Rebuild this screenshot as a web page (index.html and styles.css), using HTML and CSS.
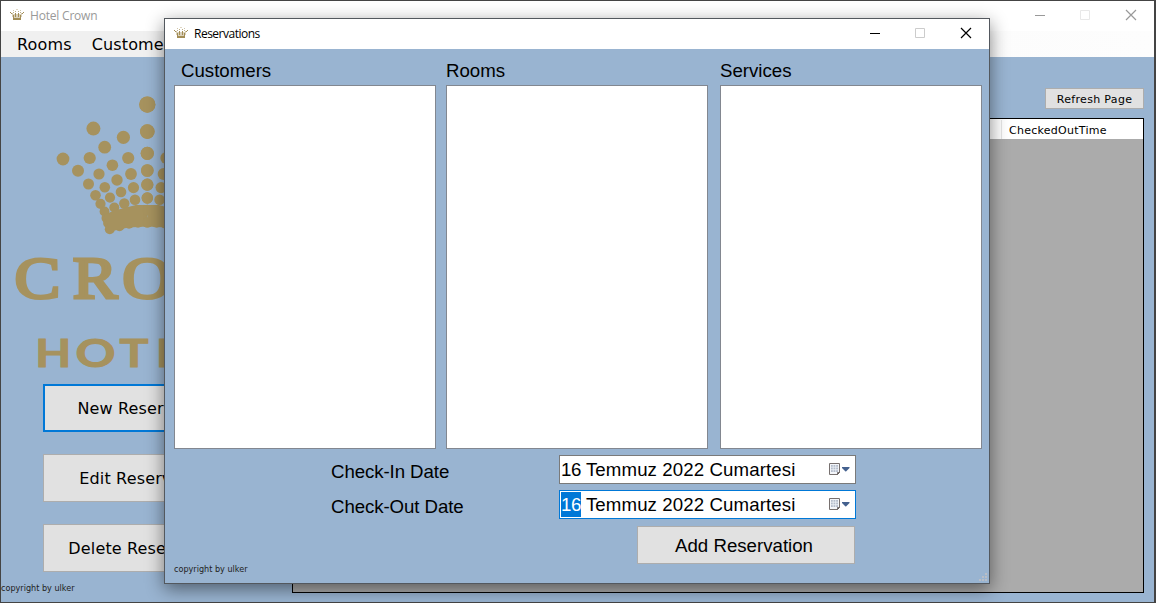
FILE: index.html
```
<!DOCTYPE html>
<html lang="en">
<head>
<meta charset="utf-8">
<title>Hotel Crown</title>
<link rel="stylesheet" href="styles.css">
</head>
<body>
<svg class="defs" width="0" height="0">
  <symbol id="crown-icon" viewBox="0 0 14 12">
    <g fill="#a38d55">
      <rect x="6" y="0" width="2" height="1" opacity=".35"/>
      <rect x="3" y="1" width="1" height="1" opacity=".5"/><rect x="10" y="1" width="1" height="1" opacity=".5"/>
      <rect x="5" y="2" width="1" height="1" opacity=".7"/><rect x="8" y="2" width="1" height="1" opacity=".7"/>
      <rect x="0" y="3" width="1" height="1"/><rect x="13" y="3" width="1" height="1"/>
      <rect x="3" y="3" width="1" height="1" opacity=".7"/><rect x="10" y="3" width="1" height="1" opacity=".7"/>
      <rect x="1" y="4" width="1.5" height="1"/><rect x="11.500" y="4" width="1.500" height="1"/>
      <rect x="2" y="5" width="10" height="3" opacity=".4"/>
      <rect x="5" y="4" width="1" height="4"/><rect x="8" y="4" width="1" height="4"/>
      <rect x="3" y="6" width="1" height="3"/><rect x="10" y="6" width="1" height="3"/>
      <rect x="3" y="8" width="8" height="1" opacity=".4"/>
      <rect x="3" y="9" width="8" height="2"/>
    </g>
  </symbol>
  <symbol id="calendar-icon" viewBox="0 0 21 13">
    <path d="M.5.500h10v9l-2 2h-8z" fill="#f4f6fa" stroke="#77706f"/>
    <path d="M8.500 11.500v-2h2z" fill="#5e5757" stroke="#5e5757" stroke-width=".7"/>
    <path d="M2 2h7v7H2z" fill="#b4bdcc"/>
    <path d="M2 4.200h7M2 6.700h7M4.200 2v7M6.700 2v7" stroke="#eef1f6" stroke-width=".8"/>
    <path d="M13 4h7.500v1L17 8.500h-.5L13 5z" fill="#44618f"/>
  </symbol>
</svg>

<div class="window main">
  <header class="titlebar">
    <svg class="app-icon"><use href="#crown-icon"/></svg>
    <span class="title">Hotel Crown</span>
    <svg class="controls" viewBox="0 0 104 12">
      <path d="M0 6.500h10" stroke="#999"/><path d="M45.500 1.500h9v9h-9z" stroke="#e8e8e8"/><path d="M91 1l10 10M101 1l-10 10" stroke="#999" stroke-width="1.200"/>
    </svg>
  </header>
  <nav class="menu"><span>Rooms</span><span>Customers</span></nav>
  <div class="body">
    <aside class="side">
      <svg class="logo" viewBox="0 57 292 327" fill="#a6925e">
        <g id="crown-half">
          <circle cx="147.300" cy="104.600" r="8.100"/><circle cx="147.300" cy="131.600" r="7.300"/><circle cx="147.300" cy="153.300" r="6.600"/><circle cx="147.300" cy="170.500" r="6.300"/><circle cx="147.300" cy="184.700" r="6.100"/><circle cx="147.300" cy="198" r="5.700"/>
          <circle cx="93.400" cy="128.600" r="7"/><circle cx="123.400" cy="137.300" r="6.600"/><circle cx="104.700" cy="147.200" r="6.400"/><circle cx="63" cy="159" r="6.400"/><circle cx="89.700" cy="158" r="6.100"/><circle cx="128.200" cy="158" r="6.100"/>
          <circle cx="78" cy="170.800" r="6"/><circle cx="112.400" cy="165.200" r="5.800"/><circle cx="99" cy="174" r="5.600"/><circle cx="131" cy="174" r="5.900"/><circle cx="88.500" cy="184" r="5.500"/><circle cx="117" cy="180" r="5.700"/>
          <circle cx="104.800" cy="187.200" r="5.300"/><circle cx="133.500" cy="187.600" r="5.600"/><circle cx="95.500" cy="195.300" r="5.300"/><circle cx="121" cy="192" r="5.300"/><circle cx="110" cy="197.600" r="5.100"/><circle cx="135" cy="199.700" r="5.300"/>
          <circle cx="100.500" cy="203.800" r="5.100"/><circle cx="124.300" cy="203.500" r="5.200"/><circle cx="114.300" cy="207.500" r="5"/><circle cx="104.500" cy="211.500" r="4.900"/>
          <circle cx="106.500" cy="218" r="5"/><circle cx="108" cy="223" r="4.900"/><circle cx="109.800" cy="229.300" r="5"/><circle cx="119.500" cy="226.300" r="5"/><circle cx="129" cy="223.800" r="5"/><circle cx="138" cy="222.800" r="5"/><circle cx="147.300" cy="222.600" r="5"/>
          <circle cx="116.500" cy="215.500" r="5"/><circle cx="126.500" cy="213" r="5"/><circle cx="137" cy="210.500" r="5.300"/><circle cx="147.300" cy="210" r="5.300"/>
          <path d="M104 215l9-4 11-3 12-3h11.300v21.500l-19 1-18 4z"/>
        </g>
        <use href="#crown-half" transform="translate(294.600 0) scale(-1 1)"/>
        <g class="crown-word">
          <text x="14.400" y="298" textLength="45.800" lengthAdjust="spacingAndGlyphs">C</text>
          <text x="72.800" y="298" textLength="44.700" lengthAdjust="spacingAndGlyphs">R</text>
          <text x="122.200" y="298" textLength="49.700" lengthAdjust="spacingAndGlyphs">O</text>
        </g>
        <g class="hotel-word">
          <text x="35.200" y="366.500" textLength="36" lengthAdjust="spacingAndGlyphs">H</text>
          <text x="75.500" y="366.500" textLength="40" lengthAdjust="spacingAndGlyphs">O</text>
          <text x="119.500" y="366.500" textLength="29" lengthAdjust="spacingAndGlyphs">T</text>
          <text x="155.500" y="366.500" textLength="30" lengthAdjust="spacingAndGlyphs">E</text>
        </g>
      </svg>
      <div class="actions">
        <button class="btn primary">New Reservation</button>
        <button class="btn">Edit Reservation</button>
        <button class="btn">Delete Reservation</button>
      </div>
      <small class="copyright">copyright by ulker</small>
    </aside>
    <main class="content">
      <button class="btn refresh">Refresh Page</button>
      <div class="grid"><div class="grid-head"><span>CheckedOutTime</span></div></div>
    </main>
  </div>
</div>

<div class="window dialog">
  <header class="titlebar">
    <svg class="app-icon"><use href="#crown-icon"/></svg>
    <span class="title">Reservations</span>
    <svg class="controls" viewBox="0 0 104 12">
      <path d="M0 6.500h10" stroke="#000"/><path d="M45.500 1.500h9v9h-9z" stroke="#ccc"/><path d="M91 1l10 10M101 1l-10 10" stroke="#000" stroke-width="1.200"/>
    </svg>
  </header>
  <div class="lists">
    <section><h2 class="inset">Customers</h2><div class="list"></div></section>
    <section><h2>Rooms</h2><div class="list"></div></section>
    <section><h2>Services</h2><div class="list"></div></section>
  </div>
  <div class="form">
    <label>Check-In Date</label>
    <div class="date"><span><i>16</i> Temmuz 2022 Cumartesi</span><svg><use href="#calendar-icon"/></svg></div>
    <label>Check-Out Date</label>
    <div class="date focus"><span><i>16</i> Temmuz 2022 Cumartesi</span><svg><use href="#calendar-icon"/></svg></div>
    <button class="btn add">Add Reservation</button>
  </div>
  <small class="copyright">copyright by ulker</small>
  <svg class="grip" viewBox="0 0 8 8" fill="#b9bec6"><path d="M6 0h2v2H6zM3 3h2v2H3zM6 3h2v2H6zM0 6h2v2H0zM3 6h2v2H3zM6 6h2v2H6z"/></svg>
</div>
</body>
</html>
```
FILE: styles.css
```
* { box-sizing: border-box; }
body { margin: 0; width: 1156px; height: 603px; overflow: hidden; position: relative; background: #444; font-family: "DejaVu Sans", Verdana, sans-serif; color: #000; }
.defs { position: absolute; }
.window { position: absolute; display: flex; flex-direction: column; background: #99b4d1; }
.main { left: 1px; top: 1px; width: 1153px; height: 601px; }
.titlebar { flex: none; height: 30px; background: #fff; display: flex; align-items: center; padding: 0 15px 0 9px; font: 12px "Open Sans", "Segoe UI", sans-serif; }
.main .titlebar { color: #999; }
.app-icon { width: 14px; height: 12px; margin: -2px 6px 0 0; }
.title { white-space: nowrap; margin-top: -1px; letter-spacing: -0.2px; }
.dialog .title { letter-spacing: -0.5px; }
.controls { width: 104px; height: 12px; margin-left: auto; fill: none; margin-top: -2px; }
.menu { flex: none; height: 26px; display: flex; gap: 20px; padding: 0 16px; font-size: 16px; letter-spacing: 0.15px; line-height: 27px; background: linear-gradient(90deg, #f0f0f0 0, #f0f0f0 15%, #fcfcfc 85%, #fdfdfd); }
.body { flex: 1; display: flex; min-height: 0; }
.side { width: 291px; flex: none; display: flex; flex-direction: column; }
.logo { width: 292px; height: 327px; flex: none; margin-left: -1px; }
.crown-word { font: 59px "Liberation Serif", serif; stroke: #a6925e; stroke-width: 3px; }
.hotel-word { font: bold 38px Lato, sans-serif; stroke: #a6925e; stroke-width: 1px; }
.actions { display: flex; flex-direction: column; gap: 22px; padding-left: 42px; }
.btn { font: 16px "DejaVu Sans", Verdana, sans-serif; color: #000; background: #e1e1e1; border: 1px solid #adadad; border-radius: 0; padding: 0; white-space: nowrap; }
.actions .btn { width: 206px; height: 48px; letter-spacing: 0.15px; }
.btn.primary { border: 2px solid #0078d7; }
.copyright { font-size: 8.1px; line-height: 10px; color: #222; white-space: nowrap; }
.side .copyright { margin-top: 11px; }
.content { flex: 1; display: flex; flex-direction: column; align-items: flex-end; padding: 31px 10px 9px 0; }
.btn.refresh { width: 99px; height: 21px; font-size: 11px; letter-spacing: 0.33px; padding-top: 1px; }
.grid { width: 852px; flex: 1; margin-top: 9px; background: #ababab; border: 1px solid #000; }
.grid-head { height: 20px; background: #fff; display: flex; justify-content: flex-end; }
.grid-head span { width: 142px; margin-top: 1px; padding-left: 7px; border-left: 1px solid #e5e5e5; font-size: 11px; letter-spacing: 0.27px; line-height: 21px; }

.dialog { left: 164px; top: 18px; width: 826px; height: 566px; border: 1px solid #53585e; box-shadow: 0 5px 17px rgba(0,0,0,.48); font-family: "Liberation Sans", Arial, sans-serif; }
.lists { display: flex; padding: 0 0 0 9px; }
.lists section { flex: none; width: 262px; margin-right: 10px; }
.lists section:nth-child(2) { margin-right: 12px; }
h2 { margin: 0; height: 36px; padding-top: 11px; font-size: 18.67px; font-weight: normal; line-height: 22px; }
h2.inset { padding-left: 7px; }
.list { height: 364px; background: #fff; border: 1px solid #828790; }
.form { display: grid; grid-template-columns: 228px 297px; row-gap: 6px; margin: 6px 0 0 166px; font-size: 18.67px; }
.form label { line-height: 33px; height: 29px; letter-spacing: -0.08px; }
.date { height: 29px; border: 1px solid #7a7a7a; background: #fff; display: flex; align-items: center; justify-content: space-between; padding: 0 5px 0 1px; white-space: nowrap; letter-spacing: 0.1px; }
.date i { font-style: normal; display: inline-block; width: 20px; line-height: 25px; letter-spacing: -0.3px; }
.date svg { width: 21px; height: 13px; }
.date.focus { border-color: #0078d7; }
.focus i { background: #0078d7; color: #fff; }
.btn.add { grid-column: 2; justify-self: end; width: 218px; height: 38px; margin: 1px 1px 0 0; padding: 1px 4px 0 0; font: 18.67px "Liberation Sans", Arial, sans-serif; }
.dialog .copyright { margin-left: 9px; font-family: "DejaVu Sans", Verdana, sans-serif; }
.grip { position: absolute; right: 2px; bottom: 2px; width: 8px; height: 8px; }
```
